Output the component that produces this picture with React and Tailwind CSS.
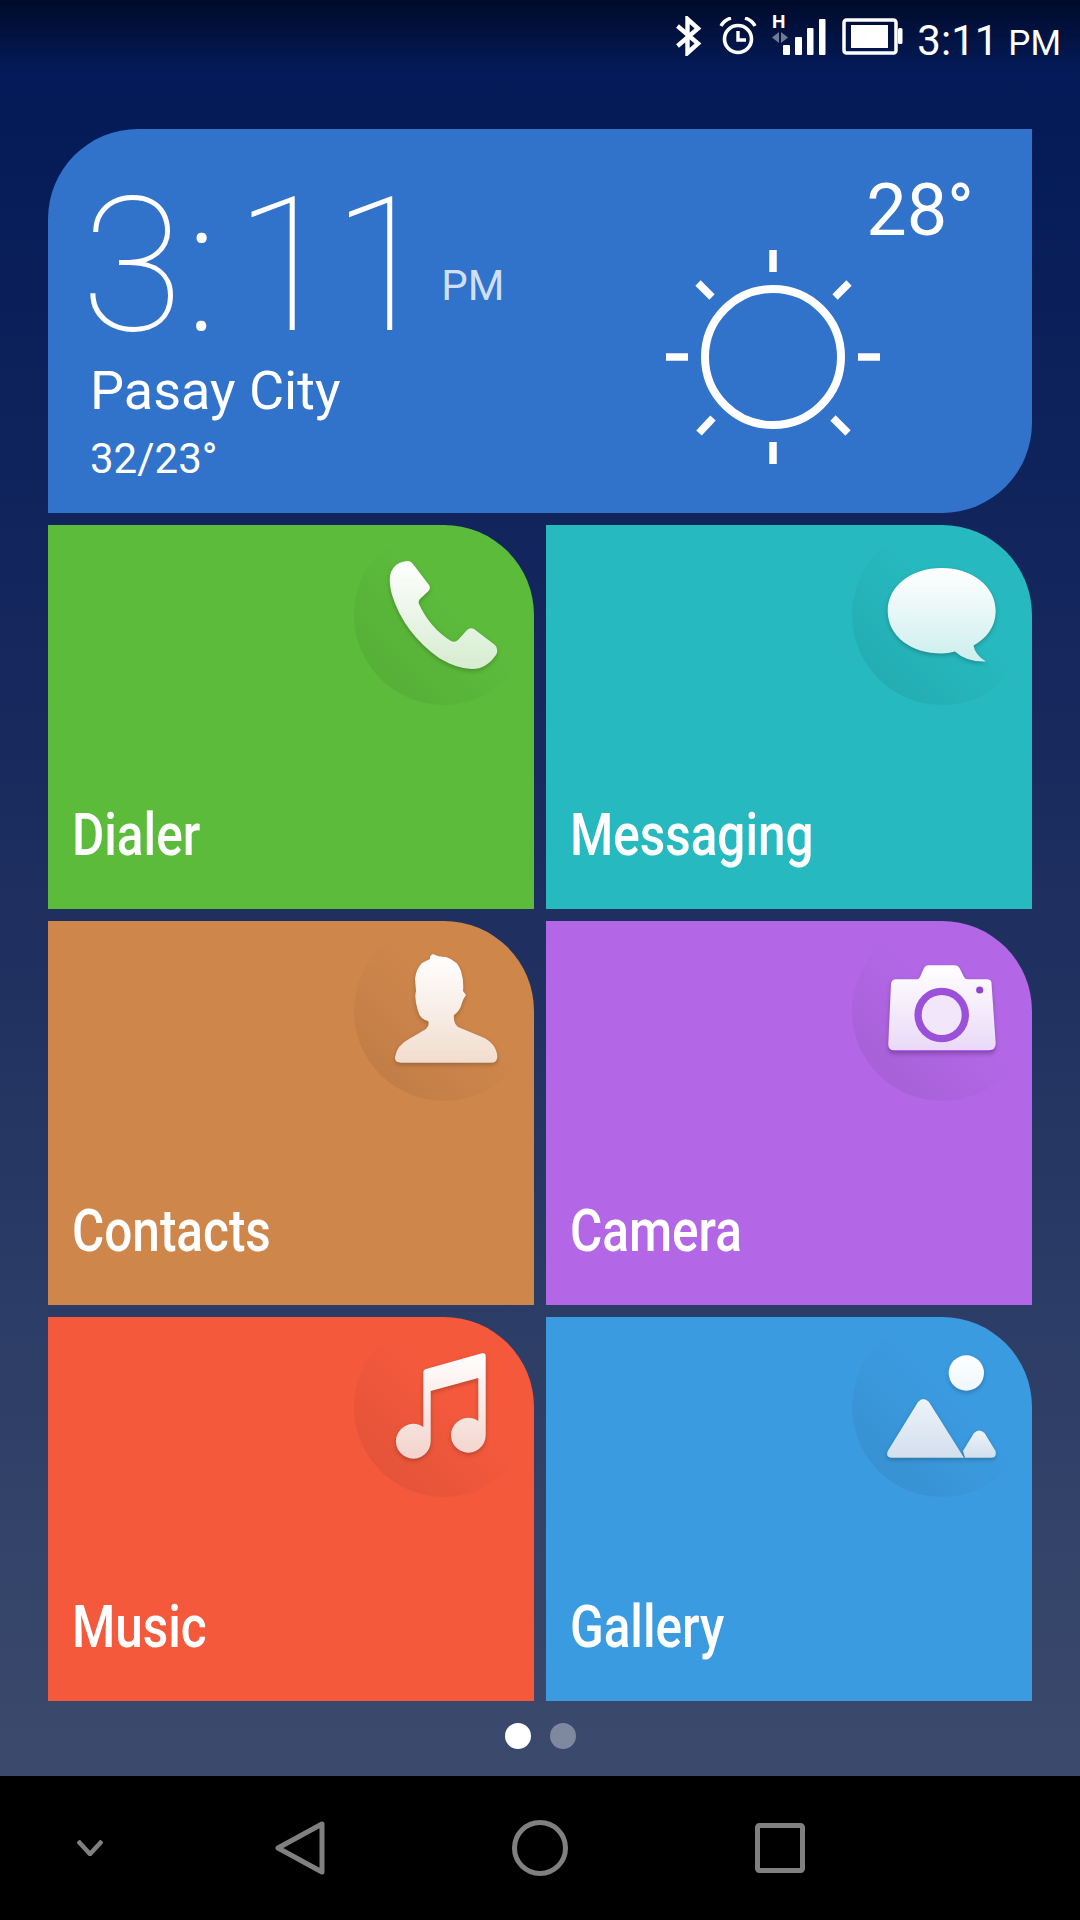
import React from "react";

// --- Tile icons, drawn in the 180x180 circle at the tile corner ---
const PhoneIcon = () => (
  <path
    d="M50 36.5 L54 36 Q57 36 59 39 L75 60 Q77 63 74.5 66 L66 74 Q64 76 65 79 Q76 103 97 116 Q101 118 104 115 L113 105 Q116 102 120 104 L141 120 Q145 124 142 130 Q135 140 126 143 Q108 147 85 133 Q50 108 38 70 Q34 55 37 47 Q41 38 50 36.5 Z"
    fill="url(#grad-dialer)"
  />
);

const BubbleIcon = () => (
  <g fill="url(#grad-messaging)">
    <path d="M89.7 43 C120 43 143.7 61 143.7 86 C143.7 102 134 114 121.5 120.5 Q123 130 134 136.5 Q114 137 103 126.5 Q96 128.5 89.7 128.5 C59 128.5 35.7 111 35.7 86 C35.7 61 59 43 89.7 43 Z" />
  </g>
);

const PersonIcon = () => (
  <path
    d="M79 33 Q84 36 92 36 Q104 40 107 50 Q110 60 109 70 L112 74 Q109 78 108 82 Q106 90 100 94 Q99 102 104 106 L128 116 Q142 122 143.3 135 Q143.5 141.7 137 141.7 L47 141.7 Q40.5 141.7 41 136 Q43 124 55 118 L72 108 Q76 104 74 100 Q66 98 64 90 Q60 78 62 70 L61 58 Q62 48 68 42 L76 38 Q75 35 79 33 Z"
    fill="url(#grad-contacts)"
  />
);

const CAMERA_BODY =
  "M44 58.3 L65 58.3 Q67 58.3 68 56 L72 47 Q73.5 44.3 76 44.3 L103 44.3 Q106 44.3 107.5 47 L112 56 Q113 58.3 116 58.3 L135 58.3 Q139 58.3 139.5 62 L143.7 122 Q144 129.3 137 129.3 L42 129.3 Q35.7 129.3 36.3 122 L39 63 Q39.5 58.3 44 58.3 Z";

const CameraIcon = () => (
  <g>
    <path d={CAMERA_BODY} transform="translate(0 2)" fill="#9243cf" />
    <path d={CAMERA_BODY} fill="url(#grad-camera)" />
    <circle cx="89.7" cy="94" r="27.3" fill="#9a50d8" />
    <circle cx="89.7" cy="94" r="20" fill="#f1e6fa" />
    <circle cx="127.7" cy="69" r="3.6" fill="#9243cf" />
  </g>
);

const NoteIcon = () => (
  <path
    d="M69.3 55 Q69.3 52.5 72 52 L128 36.3 Q131.7 35.5 131.7 39 L131.7 118.3 A17.4 17.4 0 1 1 124.3 104 L124.3 61 L76.7 74 L76.7 124.3 A17.4 17.4 0 1 1 69.3 110 Z"
    fill="url(#grad-music)"
  />
);

const LandscapeIcon = () => (
  <g>
    <circle cx="114.3" cy="56" r="17.7" fill="url(#grad-gallery-sun)" />
    <path
      d="M66 85 Q71.3 79 77 85 L112 140.7 L39 140.7 Q33.5 140 35.8 134 Z"
      fill="url(#grad-gallery)"
    />
    <path
      d="M122 116 Q127.3 111 132.5 116 L143.5 134 Q145 140.7 139 140.7 L113 140.7 L111 134 Z"
      fill="url(#grad-gallery)"
    />
  </g>
);

const TILES = [
  { name: "Dialer", bg: "bg-[#5cbb3b]", id: "dialer", start: "#ffffff", end: "#d6ecd0", Icon: PhoneIcon },
  { name: "Messaging", bg: "bg-[#26b9bf]", id: "messaging", start: "#ffffff", end: "#cdeeee", Icon: BubbleIcon },
  { name: "Contacts", bg: "bg-[#cf864b]", id: "contacts", start: "#ffffff", end: "#f1ddcf", Icon: PersonIcon },
  { name: "Camera", bg: "bg-[#b367e6]", id: "camera", start: "#ffffff", end: "#ead9f7", Icon: CameraIcon },
  { name: "Music", bg: "bg-[#f4593c]", id: "music", start: "#ffffff", end: "#f3d3cc", Icon: NoteIcon },
  { name: "Gallery", bg: "bg-[#3b9be0]", id: "gallery", start: "#eef3f9", end: "#d2dfed", Icon: LandscapeIcon },
];

function Tile({ name, bg, id, start, end, Icon }) {
  return (
    <div className={`flex h-[384px] flex-col justify-between overflow-hidden rounded-tr-[90px] ${bg}`}>
      <div className="flex justify-end">
        <div className="size-[180px] rounded-full bg-linear-to-bl from-transparent from-45% to-black/7 to-90%">
          <svg viewBox="0 0 180 180" className="size-[180px] drop-shadow-[0_2px_2px_rgba(0,0,0,0.22)]">
            <defs>
              <linearGradient id={`grad-${id}`} x1="0" y1="0" x2="0" y2="1">
                <stop offset="0" stopColor={start} />
                <stop offset="1" stopColor={end} />
              </linearGradient>
              {id === "gallery" && (
                <linearGradient id="grad-gallery-sun" x1="0" y1="0" x2="0" y2="1">
                  <stop offset="0" stopColor="#ffffff" />
                  <stop offset="1" stopColor="#eef7fd" />
                </linearGradient>
              )}
            </defs>
            <Icon />
          </svg>
        </div>
      </div>
      <div className="origin-left scale-x-[0.825] pb-[44px] pl-[29px] text-[60px] leading-none text-white [font-weight:470]">
        {name}
      </div>
    </div>
  );
}

function StatusBar() {
  return (
    <div className="flex h-[129px] items-start justify-end pr-[19px] pt-[14px] text-white">
      {/* bluetooth */}
      <svg viewBox="0 0 30 40" className="mt-[2px] h-[40px] w-[30px]">
        <path d="M3.5 10 L24 27.5 L13.5 37 L13.5 3 L24 12.5 L3.5 30" fill="none" stroke="#fff" strokeWidth="4.4" />
      </svg>
      {/* alarm */}
      <svg viewBox="0 0 38 38" className="ml-[15px] mt-[3px] h-[38px] w-[38px]">
        <circle cx="19" cy="22" r="13.5" fill="none" stroke="#fff" strokeWidth="3.6" />
        <path d="M19 14 L19 23 L27 23" fill="none" stroke="#fff" strokeWidth="3.4" />
        <path d="M2 9 Q5 3 12 1" fill="none" stroke="#fff" strokeWidth="3.4" />
        <path d="M36 9 Q33 3 26 1" fill="none" stroke="#fff" strokeWidth="3.4" />
      </svg>
      {/* signal with H badge */}
      <svg viewBox="0 -4 56 50" className="ml-[14px] -mt-[4px] h-[50px] w-[56px]">
        <text x="1" y="14" fontFamily="Roboto, sans-serif" fontWeight="700" fontSize="19" fill="#fff">H</text>
        <path d="M8 18 L8 29 L1 23.5 Z M10 18 L17 23.5 L10 29 Z" fill="#6f7a95" />
        <rect x="12" y="31" width="7" height="10" rx="1" fill="#fff" />
        <rect x="24" y="23" width="7" height="18" rx="1" fill="#fff" />
        <rect x="36" y="14" width="6.5" height="27" rx="1" fill="#fff" />
        <rect x="48" y="5" width="6.5" height="36" rx="1" fill="#fff" />
      </svg>
      {/* battery */}
      <svg viewBox="0 0 62 38" className="ml-[15px] mt-[4px] h-[38px] w-[62px]">
        <rect x="2" y="2" width="52" height="33" rx="2.5" fill="none" stroke="#fff" strokeWidth="3.5" />
        <rect x="9" y="7" width="37" height="23" fill="#fff" />
        <rect x="56" y="10" width="4.5" height="16" rx="1.5" fill="#fff" />
      </svg>
      <div className="ml-[13px] mt-[6px] flex items-baseline leading-none [font-weight:375]">
        <span className="text-[42px]">3:11</span>
        <span className="ml-[10px] text-[35px]">PM</span>
      </div>
    </div>
  );
}

function WeatherCard() {
  return (
    <div className="flex h-[384px] justify-between rounded-tl-[90px] rounded-br-[90px] bg-[#3172cb] text-white">
      <div className="pl-[42px] pt-[44px]">
        <div className="-ml-[9px] flex items-start">
          <span className="whitespace-nowrap text-[187px] leading-none [font-weight:150]">
            <span className="tracking-[2px]">3</span>
            <span className="tracking-[16px] [font-weight:250]">:</span>
            <span className="tracking-[-5px]">1</span>
            <span>1</span>
          </span>
          <span className="ml-[7px] mt-[92px] text-[42px] leading-none text-[#cfdff5]">PM</span>
        </div>
        <div className="mt-[4px] text-[54px] leading-none">Pasay City</div>
        <div className="mt-[20px] text-[42px] leading-none">32/23°</div>
      </div>
      <div className="flex flex-col items-end pr-[58px] pt-[46px]">
        <span className="text-[72px] leading-none">28°</span>
        <svg viewBox="0 0 220 220" className="mr-[91px] size-[220px]">
          <circle cx="110" cy="110" r="68" fill="none" stroke="#fff" strokeWidth="8" />
          <g stroke="#fff" strokeWidth="7.5">
            <path d="M110 3 V25" />
            <path d="M110 195 V217" />
            <path d="M3 110 H25" />
            <path d="M195 110 H217" />
            <path d="M35 36 L49 50" />
            <path d="M186 36 L172 50" />
            <path d="M50 171 L36 186" />
            <path d="M170 171 L185 186" />
          </g>
        </svg>
      </div>
    </div>
  );
}

function NavBar() {
  return (
    <div className="flex h-[144px] items-center bg-black pl-[77px]">
      <svg viewBox="0 0 26 16" className="h-[16px] w-[26px]">
        <path d="M1 1 L13 14 L25 1" fill="none" stroke="#808080" strokeWidth="4.5" />
      </svg>
      <svg viewBox="0 0 50 54" className="ml-[172px] h-[54px] w-[50px]">
        <path d="M47 3 L47 51 L3 27 Z" fill="none" stroke="#808080" strokeWidth="5" strokeLinejoin="round" />
      </svg>
      <svg viewBox="0 0 56 56" className="ml-[187px] size-[56px]">
        <circle cx="28" cy="28" r="25.5" fill="none" stroke="#808080" strokeWidth="5" />
      </svg>
      <svg viewBox="0 0 50 50" className="ml-[187px] size-[50px]">
        <rect x="2.5" y="2.5" width="45" height="45" rx="2" fill="none" stroke="#808080" strokeWidth="5" />
      </svg>
    </div>
  );
}

export default function App() {
  return (
    <div className="flex h-[1920px] w-[1080px] flex-col overflow-hidden bg-[linear-gradient(to_bottom,#000b2a_0px,#041a58_70px,#0a1f5a_300px,#1a2b5e_800px,#2b3c66_1300px,#3b4a6c_1776px)] font-['Roboto',sans-serif]">
      <StatusBar />
      <div className="px-[48px]">
        <WeatherCard />
        <div className="mt-[12px] grid grid-cols-2 gap-[12px]">
          {TILES.map((t) => (
            <Tile key={t.name} {...t} />
          ))}
        </div>
      </div>
      <div className="flex flex-1 items-center justify-center gap-[19px] pb-[5px]">
        <div className="size-[26px] rounded-full bg-white" />
        <div className="size-[26px] rounded-full bg-white/35" />
      </div>
      <NavBar />
    </div>
  );
}
